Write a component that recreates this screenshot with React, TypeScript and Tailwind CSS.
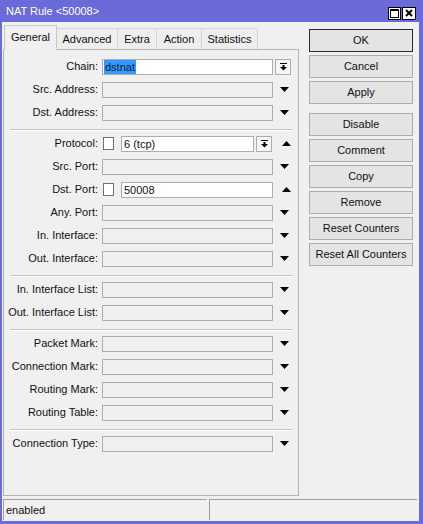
import React from 'react';

type RowKind = 'chain' | 'empty' | 'protocol' | 'port';
type Row = { label: string; kind: RowKind; value?: string };

const sections: Row[][] = [
  [
    { label: 'Chain:', kind: 'chain', value: 'dstnat' },
    { label: 'Src. Address:', kind: 'empty' },
    { label: 'Dst. Address:', kind: 'empty' },
  ],
  [
    { label: 'Protocol:', kind: 'protocol', value: '6 (tcp)' },
    { label: 'Src. Port:', kind: 'empty' },
    { label: 'Dst. Port:', kind: 'port', value: '50008' },
    { label: 'Any. Port:', kind: 'empty' },
    { label: 'In. Interface:', kind: 'empty' },
    { label: 'Out. Interface:', kind: 'empty' },
  ],
  [
    { label: 'In. Interface List:', kind: 'empty' },
    { label: 'Out. Interface List:', kind: 'empty' },
  ],
  [
    { label: 'Packet Mark:', kind: 'empty' },
    { label: 'Connection Mark:', kind: 'empty' },
    { label: 'Routing Mark:', kind: 'empty' },
    { label: 'Routing Table:', kind: 'empty' },
  ],
  [{ label: 'Connection Type:', kind: 'empty' }],
];

const tabs = [
  { name: 'General', w: 'w-[53px]' },
  { name: 'Advanced', w: 'w-[61px]' },
  { name: 'Extra', w: 'w-[39px]' },
  { name: 'Action', w: 'w-[45px]' },
  { name: 'Statistics', w: 'w-[56px]' },
];

const Triangle = ({ up }: { up?: boolean }) => (
  <svg width="9" height="5" viewBox="0 0 9 5">
    <path d={up ? 'M0 5L4.5 0L9 5Z' : 'M0 0H9L4.5 5Z'} fill="#000" />
  </svg>
);

const DropButton = () => (
  <div className="w-[16px] h-[16px] border border-[#adadad] bg-[#f6f6f6] flex items-center justify-center">
    <svg width="7" height="8" viewBox="0 0 7 8">
      <path d="M0 0.5H7" stroke="#000" strokeWidth="1" />
      <rect x="2.5" y="2" width="2" height="2" fill="#000" />
      <path d="M0 4H7L3.5 7.5Z" fill="#000" />
    </svg>
  </div>
);

const Checkbox = () => <div className="w-[11px] h-[13px] ml-[1px] border border-[#707070] bg-white" />;

const Field = ({ value, className }: { value?: string; className: string }) => (
  <div
    className={`h-[16px] border border-[#adadad] flex items-center ${value !== undefined ? 'bg-white' : 'bg-[#f0f0f0]'} ${className}`}
  >
    {value && <span className="pl-[2px] leading-[14px]">{value}</span>}
  </div>
);

const FormRow = ({ row }: { row: Row }) => (
  <div className="h-[23px] flex items-center">
    <div className="w-[94px] text-right whitespace-nowrap">{row.label}</div>
    <div className="ml-[4px] w-[171px] flex items-center">
      {row.kind === 'chain' && (
        <div className="w-full h-[16px] border border-[#adadad] bg-white flex items-center">
          <span className="ml-[1px] px-[1px] bg-[#3399ff] text-[#0a1a3a] leading-[14px]">{row.value}</span>
        </div>
      )}
      {row.kind === 'empty' && <Field className="w-full" />}
      {row.kind === 'protocol' && (
        <>
          <Checkbox />
          <Field value={row.value} className="ml-[7px] w-[133px]" />
          <div className="ml-[2px]">
            <DropButton />
          </div>
        </>
      )}
      {row.kind === 'port' && (
        <>
          <Checkbox />
          <Field value={row.value} className="ml-[7px] flex-1" />
        </>
      )}
    </div>
    <div className="flex items-center">
      {row.kind === 'chain' && (
        <div className="ml-[2px]">
          <DropButton />
        </div>
      )}
      {row.kind === 'empty' && (
        <div className="ml-[7px]">
          <Triangle />
        </div>
      )}
      {(row.kind === 'protocol' || row.kind === 'port') && (
        <div className="ml-[9px]">
          <Triangle up />
        </div>
      )}
    </div>
  </div>
);

const buttonsA = ['OK', 'Cancel', 'Apply'];
const buttonsB = ['Disable', 'Comment', 'Copy', 'Remove', 'Reset Counters', 'Reset All Counters'];

const Btn = ({ label, primary }: { label: string; primary?: boolean }) => (
  <div
    className={`h-[23px] w-[104px] flex items-center justify-center bg-[#e4e4e4] border ${
      primary ? 'border-[#2b2b2b]' : 'border-[#adadad]'
    }`}
  >
    {label}
  </div>
);

export default function App() {
  return (
    <div className="w-[423px] h-[524px] bg-[#6a6ad8] font-['Liberation_Sans',Arial,sans-serif] text-[11px] text-[#111] overflow-hidden">
      {/* title bar */}
      <div className="h-[22px] flex items-center justify-between pl-[6px] pr-[7px]">
        <span className="text-white">NAT Rule &lt;50008&gt;</span>
        <div className="flex gap-[1px] mt-[4px]">
          <div className="w-[13px] h-[13px] bg-white border border-black flex items-center justify-center">
            <div className="w-[9px] h-[9px] border border-black border-t-2" />
          </div>
          <div className="w-[14px] h-[13px] bg-white border border-black flex items-center justify-center">
            <svg width="8" height="8" viewBox="0 0 8 8">
              <path d="M1 1L7 7M7 1L1 7" stroke="#000" strokeWidth="2" />
            </svg>
          </div>
        </div>
      </div>

      {/* window body */}
      <div className="ml-[2px] mr-[4px] h-[499px] bg-[#f0f0f0] flex flex-col">
        <div className="flex pt-[3px]">
          {/* tabs and panel */}
          <div className="ml-[1px] w-[296px] flex flex-col">
            <div className="h-[24px] flex items-end pl-[1px]">
              {tabs.map((t, i) =>
                i === 0 ? (
                  <div
                    key={t.name}
                    className={`${t.w} h-[25px] -mb-[1px] relative z-10 bg-[#f0f0f0] border border-b-0 border-[#c8c8c8] flex items-center justify-center pb-[1px]`}
                  >
                    {t.name}
                  </div>
                ) : (
                  <div
                    key={t.name}
                    className={`${t.w} h-[21px] bg-[#eeeeee] border border-l-0 border-b-0 border-[#d5d5d5] flex items-center justify-center`}
                  >
                    {t.name}
                  </div>
                ),
              )}
            </div>
            <div className="h-[447px] border border-[#b4b4b4] bg-[#f0f0f0] pt-[5px]">
              {sections.map((sec, si) => (
                <div key={si}>
                  {si > 0 && (
                    <div className="h-[8px] pt-[5px] pl-[6px] pr-[6px]">
                      <div className="border-t border-[#c4c4c4] border-b border-b-white" />
                    </div>
                  )}
                  {sec.map((r) => (
                    <FormRow key={r.label} row={r} />
                  ))}
                </div>
              ))}
            </div>
          </div>

          {/* buttons */}
          <div className="ml-[10px] pt-[4px] flex flex-col">
            <div className="flex flex-col gap-[3px]">
              {buttonsA.map((b, i) => (
                <Btn key={b} label={b} primary={i === 0} />
              ))}
            </div>
            <div className="mt-[9px] flex flex-col gap-[3px]">
              {buttonsB.map((b) => (
                <Btn key={b} label={b} />
              ))}
            </div>
          </div>
        </div>

        {/* status bar */}
        <div className="mt-[3px] ml-[1px] flex gap-[2px] h-[21px]">
          <div className="w-[204px] border-t border-l border-[#a0a0a0] flex items-center pl-[2px]">enabled</div>
          <div className="w-[208px] border-t border-l border-[#a0a0a0]" />
        </div>
      </div>
    </div>
  );
}
